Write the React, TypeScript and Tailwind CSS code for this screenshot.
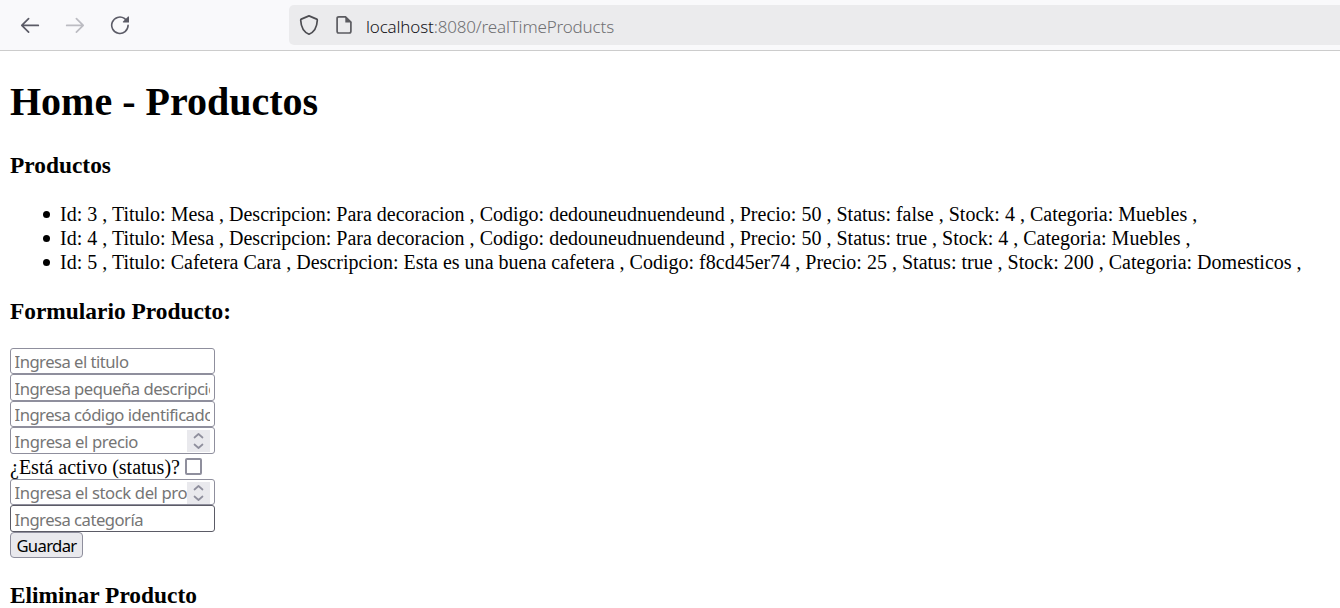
import React from "react";

const products = [
  "Id: 3 , Titulo: Mesa , Descripcion: Para decoracion , Codigo: dedouneudnuendeund , Precio: 50 , Status: false , Stock: 4 , Categoria: Muebles ,",
  "Id: 4 , Titulo: Mesa , Descripcion: Para decoracion , Codigo: dedouneudnuendeund , Precio: 50 , Status: true , Stock: 4 , Categoria: Muebles ,",
  "Id: 5 , Titulo: Cafetera Cara , Descripcion: Esta es una buena cafetera , Codigo: f8cd45er74 , Precio: 25 , Status: true , Stock: 200 , Categoria: Domesticos ,",
];

function Toolbar() {
  return (
    <header className="flex h-[51px] items-start border-b border-[#cccccc] bg-[#f9f9fb] pt-[5px] pl-5">
      <nav className="flex h-10 w-[269px] shrink-0 items-center gap-[25px] text-[#5b5b66]">
        <svg width="20" height="20" viewBox="0 0 20 20" fill="none" stroke="currentColor" strokeWidth="1.7" strokeLinecap="round" strokeLinejoin="round">
          <path d="M18.3 10.4H2M8.6 3.6L1.8 10.4L8.6 17.2" />
        </svg>
        <svg className="text-[#bcbcc2]" width="20" height="20" viewBox="0 0 20 20" fill="none" stroke="currentColor" strokeWidth="1.7" strokeLinecap="round" strokeLinejoin="round">
          <path d="M1.7 10.4H18M11.4 3.6L18.2 10.4L11.4 17.2" />
        </svg>
        <svg width="20" height="20" viewBox="0 0 20 20" fill="none" stroke="currentColor" strokeWidth="1.6" strokeLinecap="round">
          <path d="M18.1 10.3A8.2 8.2 0 1 1 14.4 3.4L16 4.9" />
          <path d="M19 1.8V7.5H13.2Q12.4 7.2 13 6.6L18.2 1.5Q18.8 1.1 19 1.8Z" fill="currentColor" stroke="none" />
        </svg>
      </nav>
      <div className="flex h-10 flex-1 items-center rounded-l-[5px] bg-[#ebebed] pl-[10px]">
        <svg className="mr-[17px] text-[#4d4d52]" width="20" height="22" viewBox="0 0 20 22" fill="none" stroke="currentColor" strokeWidth="1.7" strokeLinejoin="round">
          <path d="M10 1.9L17.7 5.1Q18.4 5.4 18.3 6.2C18 12.5 15.8 17.8 10 20.2C4.2 17.8 2 12.5 1.7 6.2Q1.6 5.4 2.3 5.1Z" />
        </svg>
        <svg className="mr-[13px] text-[#5b5b60]" width="17" height="20" viewBox="0 0 17 20" fill="none" stroke="currentColor" strokeWidth="1.7" strokeLinejoin="round">
          <path d="M9.5 1.8H2.8Q1.1 1.8 1.1 3.5V16.3Q1.1 18 2.8 18H13.2Q14.9 18 14.9 16.3V7Z" />
          <path d="M9.3 1.5V7.5H15.6Z" fill="currentColor" stroke="none" />
        </svg>
        <span className="pt-[3px] font-['Noto_Sans',sans-serif] text-[17px] leading-6 tracking-[-0.16px] font-light text-[#707073]">
          <span className="text-[#15141a]">localhost</span>:8080/realTimeProducts
        </span>
      </div>
    </header>
  );
}

function Field({ placeholder, className, numeric = false }: { placeholder: string; className: string; numeric?: boolean }) {
  return (
    <div className={`relative w-[205px] ${className}`}>
      <input
        placeholder={placeholder}
        className={`block h-full w-full rounded-[3px] border border-inherit bg-white pt-px pl-[3.5px] font-['Noto_Sans',sans-serif] text-[16.67px] outline-none placeholder:text-[#757575] ${numeric ? "pr-[27px] tracking-[-0.4px]" : "pr-1 tracking-[-0.52px]"}`}
      />
      {numeric && (
        <svg className="absolute top-[3px] right-[5px] bg-[#e9e9ed]" width="23" height="22" viewBox="0 0 23 22" fill="none" stroke="#8f8f9d" strokeWidth="1.7" strokeLinecap="round" strokeLinejoin="round">
          <path d="M7.5 7.5L11.5 4L15.5 7.5M7.5 14.5L11.5 18L15.5 14.5" />
        </svg>
      )}
    </div>
  );
}

export default function App() {
  return (
    <div className="h-[608px] overflow-hidden bg-white font-['Liberation_Serif',serif] text-black">
      <Toolbar />
      <main className="px-[10px]">
        <h1 className="pt-[28px] text-[40px] leading-[46px] font-bold">Home - Productos</h1>
        <h3 className="pt-[27px] text-[23.4px] leading-[27px] font-bold">Productos</h3>
        <ul className="pt-[23px] pl-[33px] text-[20px] leading-6 whitespace-nowrap">
          {products.map((product) => (
            <li key={product} className="flex items-center tracking-[0.005px]">
              <span className="mt-px mr-[10px] size-[7px] rounded-full bg-black" />
              {product}
            </li>
          ))}
        </ul>
        <h3 className="pt-[24px] text-[23.4px] leading-[27px] font-bold">Formulario Producto:</h3>
        <form className="flex flex-col items-start pt-[23px]">
          <Field className="h-[26px] border-[#8f8f9d]" placeholder="Ingresa el titulo" />
          <Field className="h-[27px] border-[#8f8f9d]" placeholder="Ingresa pequeña descripción" />
          <Field className="h-[26px] border-[#8f8f9d]" placeholder="Ingresa código identificador" />
          <Field className="h-[27px] border-[#8f8f9d]" placeholder="Ingresa el precio" numeric />
          <label className="flex h-[25px] items-center text-[20px] leading-6">
            ¿Está activo (status)?
            <input type="checkbox" className="ml-[5px] size-[17px] appearance-none rounded-[2px] border-2 border-[#8f8f9d] bg-white" />
          </label>
          <Field className="h-[26px] border-[#8f8f9d]" placeholder="Ingresa el stock del producto" numeric />
          <Field className="h-[27px] border-[#5b5b66]" placeholder="Ingresa categoría" />
          <button type="button" className="h-[26px] w-[73px] rounded-[4px] border border-[#8f8f9d] bg-[#e9e9ed] pt-[2px] font-['Noto_Sans',sans-serif] text-[16.67px] leading-[22px] tracking-[-0.65px]">
            Guardar
          </button>
        </form>
        <h3 className="pt-[24px] text-[23.4px] leading-[27px] font-bold">Eliminar Producto</h3>
      </main>
    </div>
  );
}
